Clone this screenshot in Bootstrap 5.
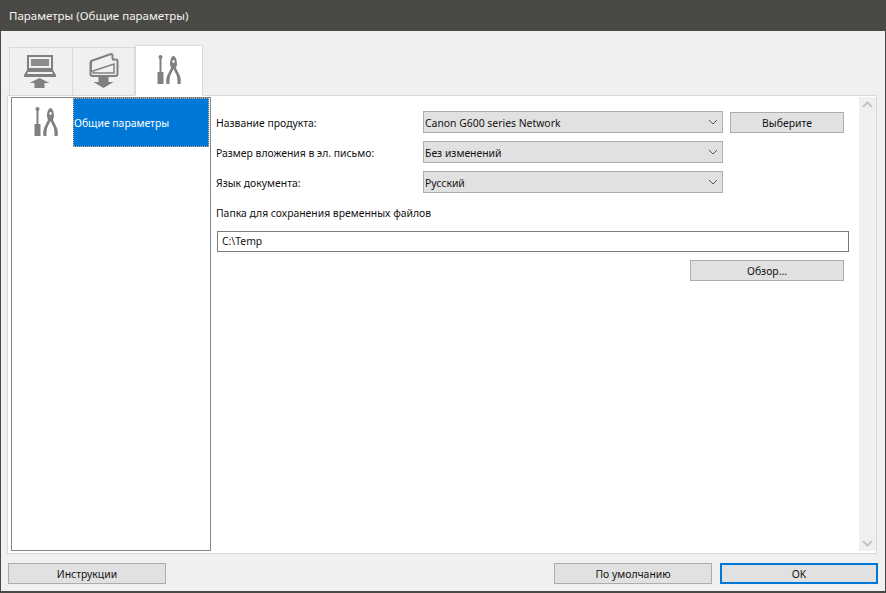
<!DOCTYPE html>
<html lang="ru">
<head>
  <meta charset="UTF-8">
  <meta name="viewport" content="width=device-width, initial-scale=1.0">
  <title>Параметры (Общие параметры)</title>
  <link href="https://cdn.jsdelivr.net/npm/bootstrap@5.3.2/dist/css/bootstrap.min.css" rel="stylesheet">
  <style>
    html, body { height: 100%; overflow: hidden; }
    body { font: 10.4px/16px "Noto Sans", "Open Sans", sans-serif; color: #111; background: #f0f0f0; }
    .dlg-window { height: 593px; border: 1px solid #4b4946; border-top: 0; border-bottom-width: 2px; }
    .dlg-title { height: 31px; background: #4b4946; color: #f4f4f4; padding: 0 9px; font-size: 11.5px; margin: 0 -1px; }
    .dlg-tabs { height: 64px; padding: 14px 0 0 8px; border: 0; flex-wrap: nowrap; }
    .dlg-tabs .nav-link { width: 62px; height: 49px; padding: 0; border: 1px solid #d9d9d9; border-left-width: 0; border-radius: 0; margin: 2px 0 -1px; background: #f0f0f0; }
    .dlg-tabs .nav-item:first-child .nav-link { width: 64px; border-left-width: 1px; }
    .dlg-tabs .nav-link.active { width: 68px; height: 51px; margin: 0 0 -1px; background: #fff; border-color: #d9d9d9 #d9d9d9 #fff; border-left-width: 1px; position: relative; z-index: 2; }
    .dlg-panel { height: 459px; margin: 0 8px 0 6px; background: #fff; border: 1px solid #d9d9d9; padding: 1px 0 2px 3px; }
    .tree-box { width: 200px; border: 1px solid #828790; border-radius: 0; }
    .tree-box .list-group-item { height: 49px; padding: 0; border: 0; border-radius: 0; background: transparent; }
    .tree-icon { width: 61px; padding-left: 7px; }
    .tree-label { width: 136px; padding-left: 1px; background: #0078d7; color: #fff; outline: 1px dotted #e8a860; outline-offset: -1px; }
    .form-area { padding: 14px 15px 0 5px; min-width: 0; }
    .form-line { height: 22px; margin-bottom: 8px; }
    .form-line label { width: 207px; padding-top: 1px; }
    .win-select.form-select { width: 300px; height: 22px; padding: 1px 24px 0 1px; font-size: 10.4px; line-height: 16px; color: #111; background-color: #e1e1e1; background-image: url("data:image/svg+xml,%3csvg xmlns='http://www.w3.org/2000/svg' viewBox='0 0 10 6'%3e%3cpath fill='none' stroke='%23555' d='M1 1l4 4 4-4'/%3e%3c/svg%3e"); background-size: 10px 6px; background-position: right 4px center; border: 1px solid #adadad; border-radius: 0; box-shadow: none; }
    .win-btn.btn { width: 158px; height: 21px; padding: 1px 0 0; font-size: 10.4px; line-height: 17px; color: #111; background: #e1e1e1; border: 1px solid #adadad; border-radius: 0; }
    .win-btn.pick-btn { width: 114px; margin: 1px 0 0 7px; }
    .win-btn.browse-btn { width: 154px; }
    .win-btn.default-btn { border: 2px solid #0078d7; line-height: 15px; }
    .path-label { margin: 12px 0 10px 0; }
    .path-input.form-control { width: 632px; height: 21px; margin: 0 0 8px 1px; padding: 0 4px 2px; font-size: 10.4px; line-height: 16px; color: #111; border: 1px solid #7a7a7a; border-radius: 0; box-shadow: none; }
    .scroll-strip { width: 17px; background: #f0f0f0; }
    .dlg-footer { padding: 9px 7px 0 7px; }
  </style>
</head>
<body>
  <!-- значок инструментов, нужен два раза -->
  <svg width="0" height="0" class="position-absolute">
    <symbol id="tools-icon" viewBox="0 0 30 38">
      <g fill="#808080">
        <circle cx="6.500" cy="11" r="2"/>
        <rect x="5.500" y="11" width="2" height="15"/>
        <rect x="3.500" y="26" width="6" height="12"/>
        <path fill-rule="evenodd" d="M19.500 10c2 0 3.500 4 3.500 8 0 2-1 3-1 4l4 8c1 3 1 6 .5 8h-3c0-4 0-7-1.500-10l-2.500-5-2.500 5c-1.500 3-1.500 6-1.500 10h-3c-.5-2-.5-5 .5-8l4-8c0-1-1-2-1-4 0-4 1.500-8 3.500-8zM19.500 14a1.200 1.500 0 1 0 .01 0z"/>
      </g>
    </symbol>
  </svg>

  <div class="dlg-window d-flex flex-column">
    <div class="dlg-title d-flex align-items-center">Параметры (Общие параметры)</div>

    <!-- вкладки -->
    <ul class="nav nav-tabs dlg-tabs">
      <li class="nav-item">
        <a class="nav-link d-flex align-items-start justify-content-center" href="#" aria-label="Scan">
          <svg width="40" height="40" viewBox="0 0 40 40" fill="#808080">
            <path fill-rule="evenodd" d="M6 7h26v15H6zM8 9v11h22V9z"/>
            <rect x="10" y="11" width="18" height="7" fill="#8c8c8c"/>
            <path d="M6 22h26l3 5v2H3v-2z"/>
            <path d="M7 24h24l1 2H6z" fill="#f0f0f0"/>
            <path d="M18.500 30l10 5h-5v5h-10v-5h-5z"/>
          </svg>
        </a>
      </li>
      <li class="nav-item">
        <a class="nav-link d-flex align-items-start justify-content-center" href="#" aria-label="Save">
          <svg width="40" height="40" viewBox="0 0 40 40" fill="none" stroke="#808080" stroke-width="2">
            <path d="M7 24V13L27 6q1.500 0 1.500 1.500V11"/>
            <path d="M6.500 14v12q0 2 2 2h23q2 0 2-2V13q0-1.500-1.500-1.500h-4"/>
            <path d="M9 23l21-7v9H9z" fill="#f0f0f0" stroke-width="1.500"/>
            <path d="M14.500 29h10v5h5l-10 6-10-6h5z" fill="#808080" stroke="none"/>
          </svg>
        </a>
      </li>
      <li class="nav-item">
        <a class="nav-link active d-flex align-items-start justify-content-center" href="#" aria-label="Tools">
          <svg width="30" height="38"><use href="#tools-icon"/></svg>
        </a>
      </li>
    </ul>

    <div class="dlg-panel d-flex">
      <div class="tree-box list-group flex-shrink-0">
        <div class="list-group-item d-flex">
          <div class="tree-icon d-flex justify-content-center flex-shrink-0">
            <svg width="30" height="38"><use href="#tools-icon"/></svg>
          </div>
          <div class="tree-label d-flex align-items-center">Общие параметры</div>
        </div>
      </div>

      <div class="form-area flex-grow-1">
        <div class="form-line d-flex align-items-center">
          <label for="product">Название продукта:</label>
          <select id="product" class="form-select win-select"><option>Canon G600 series Network</option></select>
          <button class="btn win-btn pick-btn flex-shrink-0" type="button">Выберите</button>
        </div>
        <div class="form-line d-flex align-items-center">
          <label for="attach">Размер вложения в эл. письмо:</label>
          <select id="attach" class="form-select win-select"><option>Без изменений</option></select>
        </div>
        <div class="form-line d-flex align-items-center">
          <label for="lang">Язык документа:</label>
          <select id="lang" class="form-select win-select"><option>Русский</option></select>
        </div>
        <div class="path-label">Папка для сохранения временных файлов</div>
        <input class="form-control path-input" value="C:\Temp">
        <div class="d-flex justify-content-end">
          <button class="btn win-btn browse-btn" type="button">Обзор...</button>
        </div>
      </div>

      <div class="scroll-strip d-flex flex-column justify-content-between align-items-center flex-shrink-0 py-1">
        <svg width="11" height="8" viewBox="0 0 11 8" fill="none" stroke="#c4c4c4" stroke-width="2"><path d="M1 6l4.500-4.500L10 6"/></svg>
        <svg width="11" height="8" viewBox="0 0 11 8" fill="none" stroke="#c4c4c4" stroke-width="2"><path d="M1 2l4.500 4.500L10 2"/></svg>
      </div>
    </div>

    <div class="dlg-footer d-flex">
      <button class="btn win-btn" type="button">Инструкции</button>
      <button class="btn win-btn ms-auto me-2" type="button">По умолчанию</button>
      <button class="btn win-btn default-btn" type="button">OK</button>
    </div>
  </div>

  <script src="https://cdn.jsdelivr.net/npm/bootstrap@5.3.2/dist/js/bootstrap.bundle.min.js"></script>
</body>
</html>
